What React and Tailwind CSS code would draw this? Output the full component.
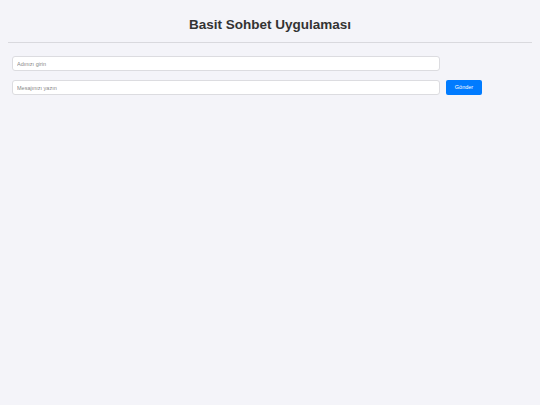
export default function App() {
  return (
    <div className="min-h-[405px] w-[540px] bg-[#f4f4f9] px-2 pt-[16px] font-['Liberation_Sans',Arial,sans-serif]">
      <h1 className="text-center text-[13.5px] font-bold leading-[18px] text-[#333]">Basit Sohbet Uygulaması</h1>
      <div className="mt-[8px] h-px bg-[#d9d9de]" />
      <div className="flex flex-col gap-[9px] px-[4px] pt-[13px]">
        <div className="flex">
          <input
            className="h-[15px] w-[428px] rounded-[3px] border border-[#dcdce0] bg-white px-[4px] text-[5.5px] text-[#333] outline-none placeholder:text-[#888]"
            placeholder="Adınızı girin"
          />
        </div>
        <div className="flex items-center gap-[6px]">
          <input
            className="h-[15px] w-[428px] rounded-[3px] border border-[#dcdce0] bg-white px-[4px] text-[5.5px] text-[#333] outline-none placeholder:text-[#888]"
            placeholder="Mesajınızı yazın"
          />
          <button className="h-[15px] w-[36px] rounded-[2px] bg-[#007bff] text-[5.5px] text-white">Gönder</button>
        </div>
      </div>
    </div>
  );
}
